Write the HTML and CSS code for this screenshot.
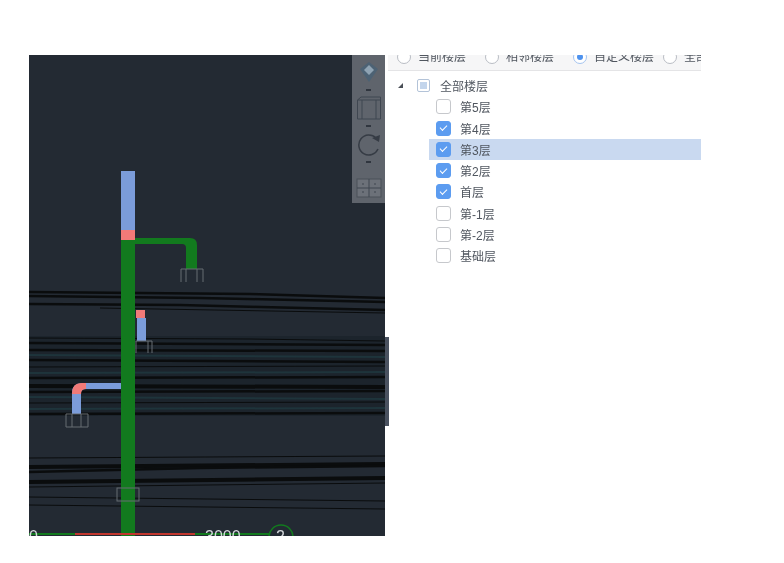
FILE: index.html
```html
<!DOCTYPE html>
<html lang="zh-CN">
  <head>
    <meta charset="UTF-8" />
    <title>楼层</title>
    <link rel="stylesheet" href="styles.css">
  </head>
  <body>
    <div class="window">
      <div class="viewer">
        <svg class="scene" viewBox="29 55 356 481" xmlns="http://www.w3.org/2000/svg">
          <!-- slab edges, seen side on -->
          <g class="band"><rect x="29" y="336" width="356" height="80" /></g>
          <g class="teal">
            <path d="M29 355 L385 357" /><path d="M29 373 L385 372" /><path d="M29 397 L385 399" /><path d="M29 409 L385 408" />
          </g>
          <g class="streaks">
            <path class="thick" d="M29 292 L250 294 L385 298" />
            <path class="thick" d="M29 296 L200 298 L385 302" />
            <path class="thick" d="M29 304 L180 305 L385 310" />
            <path d="M100 308 L385 313" />
            <path d="M29 338 L250 339 L385 341" />
            <path class="thick" d="M29 343 L385 345" />
            <path class="thick" d="M29 350 L385 351" />
            <path class="thick" d="M29 360 L385 362" />
            <path d="M29 367 L385 366" />
            <path class="thick" d="M29 378 L385 377" />
            <path class="wide" d="M29 386 L385 387" />
            <path class="thick" d="M29 392 L385 391" />
            <path d="M29 403 L385 402" />
            <path class="thick" d="M29 414 L385 413" />
            <path d="M29 458 L385 456" />
            <path class="wide" d="M29 467 L385 464" />
            <path class="thick" d="M29 472 L200 468 L385 466" />
            <path class="wide" d="M29 482 L385 478" />
            <path d="M29 487 L385 483" />
            <path d="M29 497 L385 501" />
            <path d="M29 505 L385 509" />
          </g>

          <!-- green riser and branch -->
          <rect class="green" x="121" y="240" width="14" height="296" />
          <path class="green" d="M135 238 H190 Q197 238 197 245 V269 H186 V248 Q186 244 182 244 H135 Z" />

          <!-- blue and red pipes -->
          <rect class="blue" x="121" y="171" width="14" height="61" />
          <rect class="red" x="121" y="230" width="14" height="10" />
          <rect class="red" x="136" y="310" width="9" height="8" />
          <rect class="blue" x="137" y="318" width="9" height="23" />
          <path class="blue" d="M121 383 H82 Q72 383 72 393 V414 H81 V393 Q81 389 86 389 H121 Z" />
          <path class="red" d="M72 394 Q72 383 82 383 H86 V389 Q81 389 81 394 Z" />

          <!-- pipe fittings -->
          <g class="fitting">
            <path d="M181 282 V269 H203 V282 M186 269 V282 M197 269 V282" />
            <path d="M136 353 V341 H152 V353 M148 341 V353" />
            <path d="M66 427 V414 H88 V427 H66 M72 414 V427 M81 414 V427" />
            <rect x="117" y="488" width="22" height="13" />
          </g>

          <!-- view axis along the lower edge -->
          <path class="axis-green" d="M29 534 H75 M195 534 H290" />
          <path class="axis-red" d="M75 534 H195" />
          <circle class="axis-ring" cx="281" cy="537" r="12" />
          <text class="axis-text" x="29" y="542">0</text>
          <text class="axis-text" x="205" y="542">3000</text>
          <text class="axis-text" x="276" y="542">2</text>
        </svg>

        <div class="toolbar">
          <svg class="tool" width="24" height="24" viewBox="0 0 24 24">
            <path class="cube-face" d="M12 2 L21 9 L12 22 L3 9 Z" />
            <path class="cube-top" d="M12 5 L17 10 L12 15 L7 10 Z" />
          </svg>
          <span class="tool-dot"></span>
          <svg class="tool" width="26" height="24" viewBox="0 0 26 24">
            <path class="tool-line" d="M1.500 4 H24.500 V23 H1.500 Z M1.500 4 L5 1 H24.500 V4 M6 4 V23 M20 4 V23" />
          </svg>
          <span class="tool-dot"></span>
          <svg class="tool" width="26" height="24" viewBox="0 0 26 24">
            <path class="tool-rotate" d="M20 6 A10 10 0 1 0 22 17" />
            <path class="tool-arrow" d="M16 6 L24 3 L23 10 Z" />
          </svg>
          <span class="tool-dot"></span>
          <svg class="tool tool-last" width="26" height="20" viewBox="0 0 26 20">
            <rect class="tool-fill" x="1" y="1" width="24" height="18" />
            <path class="tool-line" d="M13 1 V19 M1 10 H25 M7 5 V7 M7 13 V15 M19 5 V7 M19 13 V15" />
          </svg>
        </div>
      </div>

      <div class="handle"></div>

      <div class="panel">
        <div class="radio-bar">
          <label class="radio"><span class="radio-mark"></span>当前楼层</label>
          <label class="radio"><span class="radio-mark"></span>相邻楼层</label>
          <label class="radio"><span class="radio-mark on"></span>自定义楼层</label>
          <label class="radio radio-tight"><span class="radio-mark"></span>全部楼层</label>
        </div>

        <ul class="tree">
          <li class="tree-root">
            <span class="arrow"></span>
            <span class="root-box"></span>
            全部楼层
          </li>
          <li class="tree-item"><span class="check"></span>第5层</li>
          <li class="tree-item"><span class="check on"></span>第4层</li>
          <li class="tree-item selected"><span class="check on"></span>第3层</li>
          <li class="tree-item"><span class="check on"></span>第2层</li>
          <li class="tree-item"><span class="check on"></span>首层</li>
          <li class="tree-item"><span class="check"></span>第-1层</li>
          <li class="tree-item"><span class="check"></span>第-2层</li>
          <li class="tree-item"><span class="check"></span>基础层</li>
        </ul>
      </div>
    </div>
  </body>
</html>
```

FILE: styles.css
```css
html,
body {
  margin: 0;
  height: 100%;
  overflow: hidden;
  background-color: #ffffff;
}

body {
  font-family: "Liberation Sans", "Noto Sans CJK SC", sans-serif;
  font-size: 12px;
  color: #50565f;
}

.window {
  position: relative;
  display: flex;
  width: 672px;
  height: 481px;
  margin: 55px 0 0 29px;
  filter: blur(0.7px);
}

/* 3D view */
.viewer {
  position: relative;
  flex: none;
  width: 356px;
  height: 481px;
  overflow: hidden;
  background-color: #232a33;
}

.scene {
  display: block;
  width: 356px;
  height: 481px;
}

.band rect {
  fill: #1c242c;
}

.teal path {
  fill: none;
  stroke: #1e343b;
  stroke-width: 2;
}

.streaks path {
  fill: none;
  stroke: #0a0c0d;
  stroke-width: 1;
}

.streaks .thick {
  stroke-width: 2.5;
}

.streaks .wide {
  stroke-width: 4;
}

.green {
  fill: #127a1e;
}

.blue {
  fill: #7b9cda;
}

.red {
  fill: #f27a78;
}

.fitting {
  fill: none;
  stroke: #666c73;
  stroke-width: 1;
}

.axis-green {
  fill: none;
  stroke: #127a1e;
  stroke-width: 2;
}

.axis-red {
  fill: none;
  stroke: #c2372e;
  stroke-width: 2;
}

.axis-ring {
  fill: #232a33;
  stroke: #127a1e;
  stroke-width: 1.5;
}

.axis-text {
  font-size: 16px;
  fill: #d5d8dc;
}

/* floating view tools */
.toolbar {
  position: absolute;
  top: 0;
  right: 0;
  display: flex;
  flex-direction: column;
  align-items: center;
  gap: 5px;
  width: 33px;
  height: 148px;
  padding-top: 5px;
  box-sizing: border-box;
  background-color: #5f646c;
}

.tool {
  display: block;
  flex: none;
}

.tool-last {
  margin-top: 10px;
}

.tool-dot {
  flex: none;
  width: 5px;
  height: 2px;
  background-color: #30363f;
}

.cube-face {
  fill: #4d6274;
}

.cube-top {
  fill: #8fa3b3;
}

.tool-line {
  fill: none;
  stroke: #3f4650;
  stroke-width: 1;
}

.tool-fill {
  fill: #6c7179;
  stroke: #4a5059;
}

.tool-rotate {
  fill: none;
  stroke: #363c45;
  stroke-width: 1.5;
}

.tool-arrow {
  fill: #363c45;
}

/* divider grip between view and panel */
.handle {
  position: absolute;
  top: 282px;
  left: 356px;
  width: 4px;
  height: 89px;
  background-color: #4a5260;
}

/* floor panel */
.panel {
  flex: none;
  width: 313px;
  margin-left: 3px;
  overflow: hidden;
}

.radio-bar {
  display: flex;
  align-items: flex-end;
  gap: 19px;
  height: 16px;
  padding: 0 0 6px 9px;
  box-sizing: border-box;
  overflow: hidden;
  background-color: #f6f6f7;
  border-bottom: 1px solid #e4e4e6;
  line-height: 14px;
  white-space: nowrap;
}

.radio {
  display: flex;
  flex: none;
  align-items: center;
  gap: 7px;
}

.radio-tight {
  margin-left: -10px;
}

.radio-mark {
  display: flex;
  align-items: center;
  justify-content: center;
  width: 12px;
  height: 12px;
  border: 1px solid #b9bdc4;
  border-radius: 50%;
  background-color: #ffffff;
}

.radio-mark.on {
  border-color: #a5c4ef;
}

.radio-mark.on::after {
  content: "";
  width: 6px;
  height: 6px;
  border-radius: 50%;
  background-color: #4e92ee;
}

.tree {
  margin: 4px 0 0;
  padding: 0;
  list-style: none;
}

.tree li {
  display: flex;
  align-items: center;
  height: 21.25px;
}

.tree-root {
  padding-left: 10px;
}

.arrow {
  width: 0;
  height: 0;
  margin-right: 14px;
  border-style: solid;
  border-width: 0 0 5px 5px;
  border-color: transparent transparent #4a4f57 transparent;
}

.root-box {
  display: flex;
  align-items: center;
  justify-content: center;
  width: 11px;
  height: 11px;
  margin-right: 10px;
  border: 1px solid #b3c3d8;
  border-radius: 2px;
}

.root-box::after {
  content: "";
  width: 7px;
  height: 7px;
  background-color: #c3d5ec;
}

.tree-item {
  margin-left: 41px;
  padding-left: 7px;
}

.tree-item.selected {
  background-color: #c9d9f0;
}

.check {
  display: flex;
  flex: none;
  align-items: center;
  justify-content: center;
  width: 13px;
  height: 13px;
  margin-right: 9px;
  border: 1px solid #c6c8cc;
  border-radius: 3px;
  background-color: #ffffff;
}

.check.on {
  border-color: #5c9cf0;
  background-color: #5c9cf0;
}

.check.on::after {
  content: "";
  width: 6px;
  height: 3px;
  margin-top: -2px;
  border-left: 1.5px solid #ffffff;
  border-bottom: 1.5px solid #ffffff;
  transform: rotate(-45deg);
}
```
